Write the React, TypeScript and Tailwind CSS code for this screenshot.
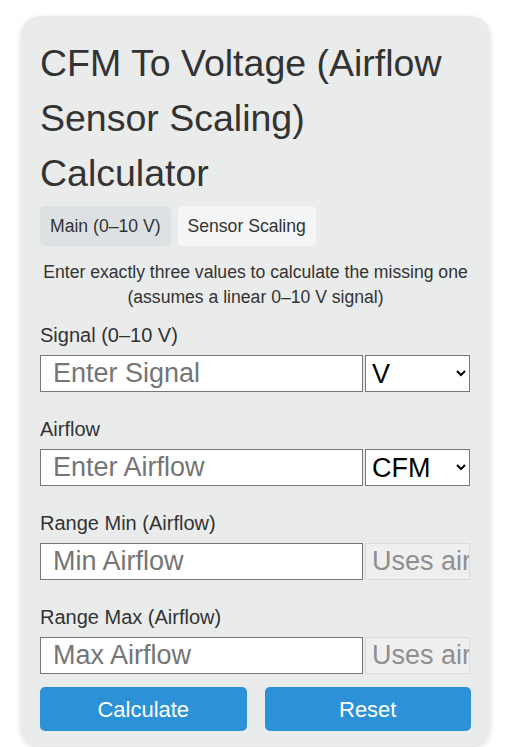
import React from 'react';

const fields = [
  { label: 'Signal (0–10 V)', placeholder: 'Enter Signal', unit: ['V', 'mV'] },
  { label: 'Airflow', placeholder: 'Enter Airflow', unit: ['CFM', 'm³/h', 'L/s'] },
  { label: 'Range Min (Airflow)', placeholder: 'Min Airflow', unit: null },
  { label: 'Range Max (Airflow)', placeholder: 'Max Airflow', unit: null },
];

export default function App() {
  return (
    <div className="min-h-screen bg-white pt-4 font-['Liberation_Sans',Arial,sans-serif] text-[#333]">
      <div className="ml-[21px] w-[469px] rounded-[20px] bg-[#eaebeb] px-[19px] pt-5 pb-[15px] shadow-[0_2px_6px_rgba(0,0,0,0.15)]">
        <h1 className="text-[37.5px] leading-[55px] font-normal text-[#333]">
          CFM To Voltage (Airflow Sensor Scaling) Calculator
        </h1>

        <div className="mt-[5px] flex gap-[7px]">
          <button className="h-10 rounded-[5px] bg-[#dee1e4] px-[10px] text-[17.6px] text-[#333]">
            Main (0–10 V)
          </button>
          <button className="h-10 rounded-[5px] bg-[#f4f5f7] px-[10px] text-[17.6px] text-[#333]">
            Sensor Scaling
          </button>
        </div>

        <p className="mt-[14px] text-center text-[17.6px] leading-[25px]">
          Enter exactly three values to calculate the missing one (assumes a linear 0–10 V signal)
        </p>

        {fields.map((f, i) => (
          <div key={f.label} className={i === 0 ? 'mt-[13px]' : 'mt-[25px]'}>
            <label className="block text-[20px] leading-6">{f.label}</label>
            <div className="mt-2 flex gap-[2px]">
              <input
                type="text"
                placeholder={f.placeholder}
                className="h-[37px] w-[323px] border border-[#767676] bg-white pl-3 pr-2 text-[27px] text-black placeholder:text-[#757575]"
              />
              {f.unit ? (
                <select className="h-[37px] w-[105px] border border-[#767676] bg-white pl-[2px] text-[27px] text-black">
                  {f.unit.map((u) => (
                    <option key={u}>{u}</option>
                  ))}
                </select>
              ) : (
                <input
                  type="text"
                  disabled
                  value="Uses airflow units"
                  readOnly
                  className="h-[37px] w-[105px] border border-[#dcdcdc] bg-[#efefef] pl-[6px] pr-0 text-[27px] text-[#8f8f8f]"
                />
              )}
            </div>
          </div>
        ))}

        <div className="mt-[13px] flex gap-[18px]">
          <button className="h-11 flex-1 rounded-[5px] bg-[#2d91d7] text-[22px] text-white">Calculate</button>
          <button className="h-11 flex-1 rounded-[5px] bg-[#2d91d7] text-[22px] text-white">Reset</button>
        </div>
      </div>
    </div>
  );
}
